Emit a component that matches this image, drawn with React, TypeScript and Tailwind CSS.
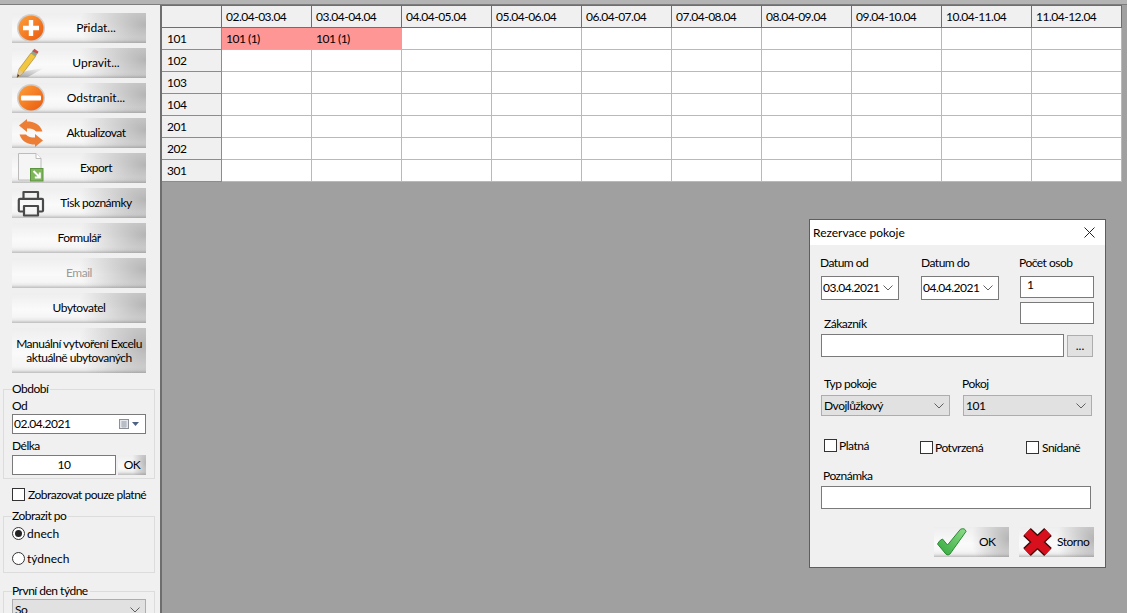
import type { ReactNode } from "react";

const glossy =
  "bg-[linear-gradient(to_top,rgba(90,90,90,0.34)_0,rgba(120,120,120,0.08)_3px,rgba(255,255,255,0)_6px),radial-gradient(ellipse_50%_130%_at_100%_40%,rgba(140,140,140,0.62)_0,rgba(140,140,140,0)_100%),linear-gradient(180deg,#eeeeee_0,#fafafa_55%,#f2f2f2_100%)]";

const days = [
  "02.04-03.04",
  "03.04-04.04",
  "04.04-05.04",
  "05.04-06.04",
  "06.04-07.04",
  "07.04-08.04",
  "08.04-09.04",
  "09.04-10.04",
  "10.04-11.04",
  "11.04-12.04",
];

const rooms = ["101", "102", "103", "104", "201", "202", "301"];

function PlusIcon() {
  return (
    <svg width="34" height="30" viewBox="0 0 34 30">
      <defs>
        <linearGradient id="org1" x1="0" y1="0" x2="1" y2="1">
          <stop offset="0" stopColor="#ffa13a" />
          <stop offset="1" stopColor="#e9590f" />
        </linearGradient>
      </defs>
      <circle cx="19" cy="15" r="14" fill="#cfcfcf" />
      <circle cx="19" cy="15" r="12.5" fill="url(#org1)" />
      <path d="M16.8 7h4.4v5.8H27v4.4h-5.8V23h-4.4v-5.8H11v-4.4h5.8z" fill="#fff" />
    </svg>
  );
}

function MinusIcon() {
  return (
    <svg width="34" height="30" viewBox="0 0 34 30">
      <circle cx="19" cy="15" r="14" fill="#cfcfcf" />
      <circle cx="19" cy="15" r="12.5" fill="url(#org1)" />
      <rect x="9" y="12.6" width="20" height="4.8" rx="1" fill="#fff" />
    </svg>
  );
}

function PencilIcon() {
  return (
    <svg width="34" height="30" viewBox="0 0 34 30" className="overflow-visible">
      <defs>
        <linearGradient id="shade" x1="0" y1="1" x2="1" y2="0">
          <stop offset="0" stopColor="#8a8a8a" stopOpacity="0.7" />
          <stop offset="1" stopColor="#8a8a8a" stopOpacity="0" />
        </linearGradient>
      </defs>
      <path d="M5 29 L14 23 L32 20 L16 29 Z" fill="url(#shade)" />
      <path d="M5 29.5 L7 21 L19 5 L23.5 8.5 L11 25 Z" fill="#f3c63f" stroke="#9a7a2a" strokeWidth="0.6" />
      <path d="M5 29.5 L7 21 L11 25 Z" fill="#e3c79a" />
      <path d="M5 29.5 L5.8 26 L7.5 27.8 Z" fill="#443322" />
      <path d="M19 5 L21 2.2 L25.4 5.8 L23.5 8.5 Z" fill="#8fa58f" />
      <path d="M20.3 3.2 L22.4 0.8 L26.6 3.8 L25.4 5.8 Z" fill="#c9504a" />
    </svg>
  );
}

function RefreshIcon() {
  const arrow = "M15 1 L7 7.5 L15 14 V10.5 C19 10.5 22 11 24 13.5 H30.5 C28 6 22 3.5 15 3.5 Z";
  return (
    <svg width="34" height="30" viewBox="0 0 34 30">
      <path d={arrow} fill="#ec7f35" />
      <path d={arrow} fill="#ec7f35" transform="rotate(180 19 15)" />
    </svg>
  );
}

function ExportIcon() {
  return (
    <svg width="34" height="30" viewBox="0 0 34 30" className="overflow-visible">
      <path d="M6.5 0.5 H24 L29 5.5 V27 H6.5 Z" fill="#f5f5f5" stroke="#bcbcbc" />
      <path d="M24 0.5 V5.5 H29" fill="#fff" stroke="#bcbcbc" />
      <rect x="18.5" y="15.5" width="12.5" height="12.5" fill="#7fb65a" stroke="#5c9440" />
      <path d="M21.5 18 L27.5 24 M27.8 19.5 V24.5 H22.8" stroke="#fff" strokeWidth="2" fill="none" />
    </svg>
  );
}

function PrinterIcon() {
  return (
    <svg width="34" height="30" viewBox="0 0 34 30" className="overflow-visible">
      <path d="M11.5 11 V4 H26 V11" fill="none" stroke="#4a4a4a" strokeWidth="2.2" strokeLinejoin="round" />
      <path d="M12 23.5 H8 Q6.8 23.5 6.8 22.5 V12 Q6.8 10.8 8 10.8 H30 Q31 10.8 31 12 V22.5 Q31 23.5 30 23.5 H26" fill="none" stroke="#4a4a4a" strokeWidth="2.2" />
      <path d="M12 18 H26 V27.5 H12 Z" fill="none" stroke="#4a4a4a" strokeWidth="2.2" strokeLinejoin="round" />
    </svg>
  );
}

function CheckIcon() {
  return (
    <svg width="34" height="30" viewBox="0 0 34 30" className="overflow-visible">
      <defs>
        <linearGradient id="grn" x1="0" y1="1" x2="1" y2="0">
          <stop offset="0" stopColor="#2fa83a" />
          <stop offset="1" stopColor="#8fdc8a" />
        </linearGradient>
      </defs>
      <path d="M3.5 17 Q5.5 13 8.5 12 L13.5 18 L26.5 2.2 Q31 0.5 32 4.5 L16 27 Q14 29 12 27.2 Z" fill="url(#grn)" stroke="#2a8a34" />
    </svg>
  );
}

function CrossIcon() {
  return (
    <svg width="34" height="30" viewBox="0 0 34 30" className="overflow-visible">
      <path d="M8 5 L29 25 M29 5 L8 25" stroke="#3a0505" strokeWidth="11" />
      <path d="M8 5 L29 25 M29 5 L8 25" stroke="#d80f1c" strokeWidth="8.5" />
    </svg>
  );
}

function Chevron() {
  return (
    <svg width="10" height="6" viewBox="0 0 10 6" className="shrink-0">
      <path d="M0.5 0.5 L5 5 L9.5 0.5" fill="none" stroke="#606060" />
    </svg>
  );
}

function SideButton({ icon, label, disabled, tall, loose }: { icon?: ReactNode; label: ReactNode; disabled?: boolean; tall?: boolean; loose?: boolean }) {
  return (
    <div className={`${glossy} flex w-[134px] items-center text-center leading-[14px] ${tall ? "h-[45px]" : "h-[30px]"} ${disabled ? "text-[#9a9a9a]" : "text-black"}`}>
      {icon && <span className="flex h-[30px] w-[34px] shrink-0">{icon}</span>}
      <span className={`flex-1 whitespace-nowrap ${loose ? "tracking-normal" : ""}`}>{label}</span>
    </div>
  );
}

function Group({ title, className, children }: { title: string; className?: string; children: ReactNode }) {
  return (
    <fieldset className={`mx-[3px] w-[152px] border border-[#dcdcdc] px-[8px] ${className ?? ""}`}>
      <legend className="px-0 pr-[2px] leading-[16px]">{title}</legend>
      {children}
    </fieldset>
  );
}

function Box({ className }: { className?: string }) {
  return <span className={`block h-[13px] w-[13px] shrink-0 border border-[#333] bg-white ${className ?? ""}`} />;
}

function Radio({ on }: { on?: boolean }) {
  return (
    <span className="flex h-[13px] w-[13px] shrink-0 items-center justify-center rounded-full border border-[#333] bg-white">
      {on && <span className="h-[7px] w-[7px] rounded-full bg-[#222]" />}
    </span>
  );
}

function DateSelect({ value }: { value: string }) {
  return (
    <div className="flex h-[24px] w-[78px] items-center justify-between border border-[#7a7a7a] bg-white pl-[1px] pr-[5px]">
      <span>{value}</span>
      <Chevron />
    </div>
  );
}

function GraySelect({ value, className }: { value: string; className?: string }) {
  return (
    <div className={`flex items-center justify-between border border-[#adadad] bg-[#e1e1e1] pl-[2px] pr-[5px] ${className ?? ""}`}>
      <span>{value}</span>
      <Chevron />
    </div>
  );
}

function Sidebar() {
  return (
    <aside className="h-full w-[160px] shrink-0 overflow-hidden bg-[#f0f0f0] pt-[8px]">
      <div className="ml-[12px] flex flex-col gap-[5px]">
        <SideButton loose icon={<PlusIcon />} label="Přidat..." />
        <SideButton loose icon={<PencilIcon />} label="Upravit..." />
        <SideButton loose icon={<MinusIcon />} label="Odstranit..." />
        <SideButton icon={<RefreshIcon />} label="Aktualizovat" />
        <SideButton icon={<ExportIcon />} label="Export" />
        <SideButton icon={<PrinterIcon />} label="Tisk poznámky" />
        <SideButton label="Formulář" />
        <SideButton label="Email" disabled />
        <SideButton label="Ubytovatel" />
        <SideButton
          tall
          label={
            <>
              Manuální vytvoření Excelu
              <br />
              aktuálně ubytovaných
            </>
          }
        />
      </div>

      <Group title="Období" className="mt-[8px] h-[98px]">
        <div className="leading-[18px]">Od</div>
        <div className="-mt-px flex h-[20px] w-[134px] items-center border border-[#7a7a7a] bg-white pl-[1px] pr-[6px]">
          <span className="flex-1">02.04.2021</span>
          <svg width="20" height="12" viewBox="0 0 20 12">
            <rect x="0.5" y="1.5" width="9" height="9" fill="#e4e7ec" stroke="#8a8f98" />
            <path d="M2 4 H8 M2 6 H8 M2 8 H8 M4 3 V10 M6 3 V10" stroke="#9aa0aa" strokeWidth="0.7" />
            <path d="M13 4 H20 L16.5 8 Z" fill="#4d6185" />
          </svg>
        </div>
        <div className="mt-[4px] leading-[16px]">Délka</div>
        <div className="mt-[1px] flex w-[134px] gap-[2px]">
          <div className="flex h-[20px] w-[104px] items-center justify-center border border-[#7a7a7a] bg-white">10</div>
          <div className={`${glossy} flex h-[20px] w-[28px] items-center justify-center`}>OK</div>
        </div>
      </Group>

      <div className="ml-[12px] mt-[9px] flex h-[13px] items-center gap-[3px]">
        <Box />
        <span className="whitespace-nowrap">Zobrazovat pouze platné</span>
      </div>

      <Group title="Zobrazit po" className="mt-[7px] h-[65px]">
        <div className="flex flex-col gap-[12px] pt-[3px] tracking-normal">
          <div className="flex h-[13px] items-center gap-[2px]">
            <Radio on />
            <span>dnech</span>
          </div>
          <div className="flex h-[13px] items-center gap-[2px]">
            <Radio />
            <span>týdnech</span>
          </div>
        </div>
      </Group>

      <Group title="První den týdne" className="mt-[10px] h-[60px]">
        <GraySelect value="So" className="h-[22px] w-[134px]" />
      </Group>
    </aside>
  );
}

function Table() {
  return (
    <div className="grid w-[960px] grid-cols-[60px_repeat(10,90px)] border-t border-[#6e6e6e] bg-white">
      <div className="h-[22px] border-b border-r border-[#6e6e6e] bg-[#f0f0f0]" />
      {days.map((d) => (
        <div key={d} className="flex h-[22px] items-center border-b border-r border-[#6e6e6e] bg-[#f0f0f0] pl-[4px]">
          {d}
        </div>
      ))}
      {rooms.map((room, r) => (
        <Row key={room} room={room} first={r === 0} />
      ))}
    </div>
  );
}

function Row({ room, first }: { room: string; first: boolean }) {
  return (
    <>
      <div className="flex h-[22px] items-center border-b border-r border-[#8c8c8c] bg-[#f0f0f0] pl-[5px]">{room}</div>
      {days.map((d, i) =>
        first && i < 2 ? (
          <div key={d} className="flex h-[22px] items-center border-b border-[#b9b9b9] bg-[#ff9696] pl-[4px]">
            101 (1)
          </div>
        ) : (
          <div key={d} className="h-[22px] border-b border-r border-[#b9b9b9]" />
        ),
      )}
    </>
  );
}

function Dialog() {
  return (
    <div className="absolute left-[809px] top-[219px] h-[349px] w-[297px] border border-[#5e5e5e] bg-[#f0f0f0]">
      <div className="flex h-[25px] items-center justify-between bg-white pl-[3px] pr-[10px]">
        <span className="tracking-normal">Rezervace pokoje</span>
        <svg width="11" height="11" viewBox="0 0 11 11">
          <path d="M0.5 0.5 L10.5 10.5 M10.5 0.5 L0.5 10.5" stroke="#222" />
        </svg>
      </div>

      <div className="pl-[11px] pt-[10px]">
        <div className="flex">
          <div className="w-[199px]">
            <div className="flex">
              <div className="w-[100px]">
                <div className="-ml-px leading-[16px]">Datum od</div>
                <div className="mt-[5px]">
                  <DateSelect value="03.04.2021" />
                </div>
              </div>
              <div>
                <div className="leading-[16px]">Datum do</div>
                <div className="mt-[5px]">
                  <DateSelect value="04.04.2021" />
                </div>
              </div>
            </div>
            <div className="ml-[3px] mt-[16px] leading-[16px]">Zákazník</div>
          </div>
          <div className="w-[74px]">
            <div className="-ml-px leading-[16px]">Počet osob</div>
            <div className="mt-[5px] h-[22px] border border-[#7a7a7a] bg-white pl-[6px] leading-[16px]">1</div>
            <div className="mt-[4px] h-[22px] border border-[#7a7a7a] bg-white" />
          </div>
        </div>

        <div className="mt-[2px] flex items-start">
          <div className="h-[23px] w-[243px] border border-[#7a7a7a] bg-white" />
          <div className="ml-[3px] mt-px flex h-[22px] w-[26px] items-center justify-center border border-[#adadad] bg-[#e1e1e1] tracking-normal">...</div>
        </div>

        <div className="mt-[19px] flex leading-[16px]">
          <div className="ml-[3px] w-[138px]">Typ pokoje</div>
          <div>Pokoj</div>
        </div>
        <div className="mt-[3px] flex gap-[13px]">
          <GraySelect value="Dvojlůžkový" className="h-[21px] w-[129px]" />
          <GraySelect value="101" className="h-[21px] w-[129px]" />
        </div>

        <div className="ml-[3px] mt-[23px] grid h-[15px] grid-cols-[96px_106px_auto]">
          <div className="flex h-[13px] items-center gap-[2px]">
            <Box />
            <span>Platná</span>
          </div>
          <div className="mt-[2px] flex h-[13px] items-center gap-[2px]">
            <Box />
            <span>Potvrzená</span>
          </div>
          <div className="mt-[2px] flex h-[13px] items-center gap-[3px]">
            <Box />
            <span>Snídaně</span>
          </div>
        </div>

        <div className="ml-[2px] mt-[14px] leading-[16px]">Poznámka</div>
        <div className="mt-[2px] h-[23px] w-[270px] border border-[#7a7a7a] bg-white" />

        <div className="mt-[18px] flex w-[273px] justify-end gap-[10px]">
          <div className={`${glossy} flex h-[30px] w-[75px] items-center`}>
            <span className="shrink-0">
              <CheckIcon />
            </span>
            <span className="ml-[11px]">OK</span>
          </div>
          <div className={`${glossy} flex h-[30px] w-[75px] items-center`}>
            <span className="shrink-0">
              <CrossIcon />
            </span>
            <span className="ml-[4px]">Storno</span>
          </div>
        </div>
      </div>
    </div>
  );
}

export default function App() {
  return (
    <div className="relative flex h-[613px] w-[1127px] flex-col overflow-hidden bg-[#a0a0a0] font-['Lato',sans-serif] text-[12px] tracking-[-0.5px] text-black">
      <div className="h-[5px] shrink-0 border-b border-[#7d7d7d] bg-[#b4b4b4]" />
      <div className="flex min-h-0 flex-1">
        <Sidebar />
        <div className="flex-1 border-l-2 border-[#6e6e6e]">
          <Table />
        </div>
      </div>
      <Dialog />
    </div>
  );
}
